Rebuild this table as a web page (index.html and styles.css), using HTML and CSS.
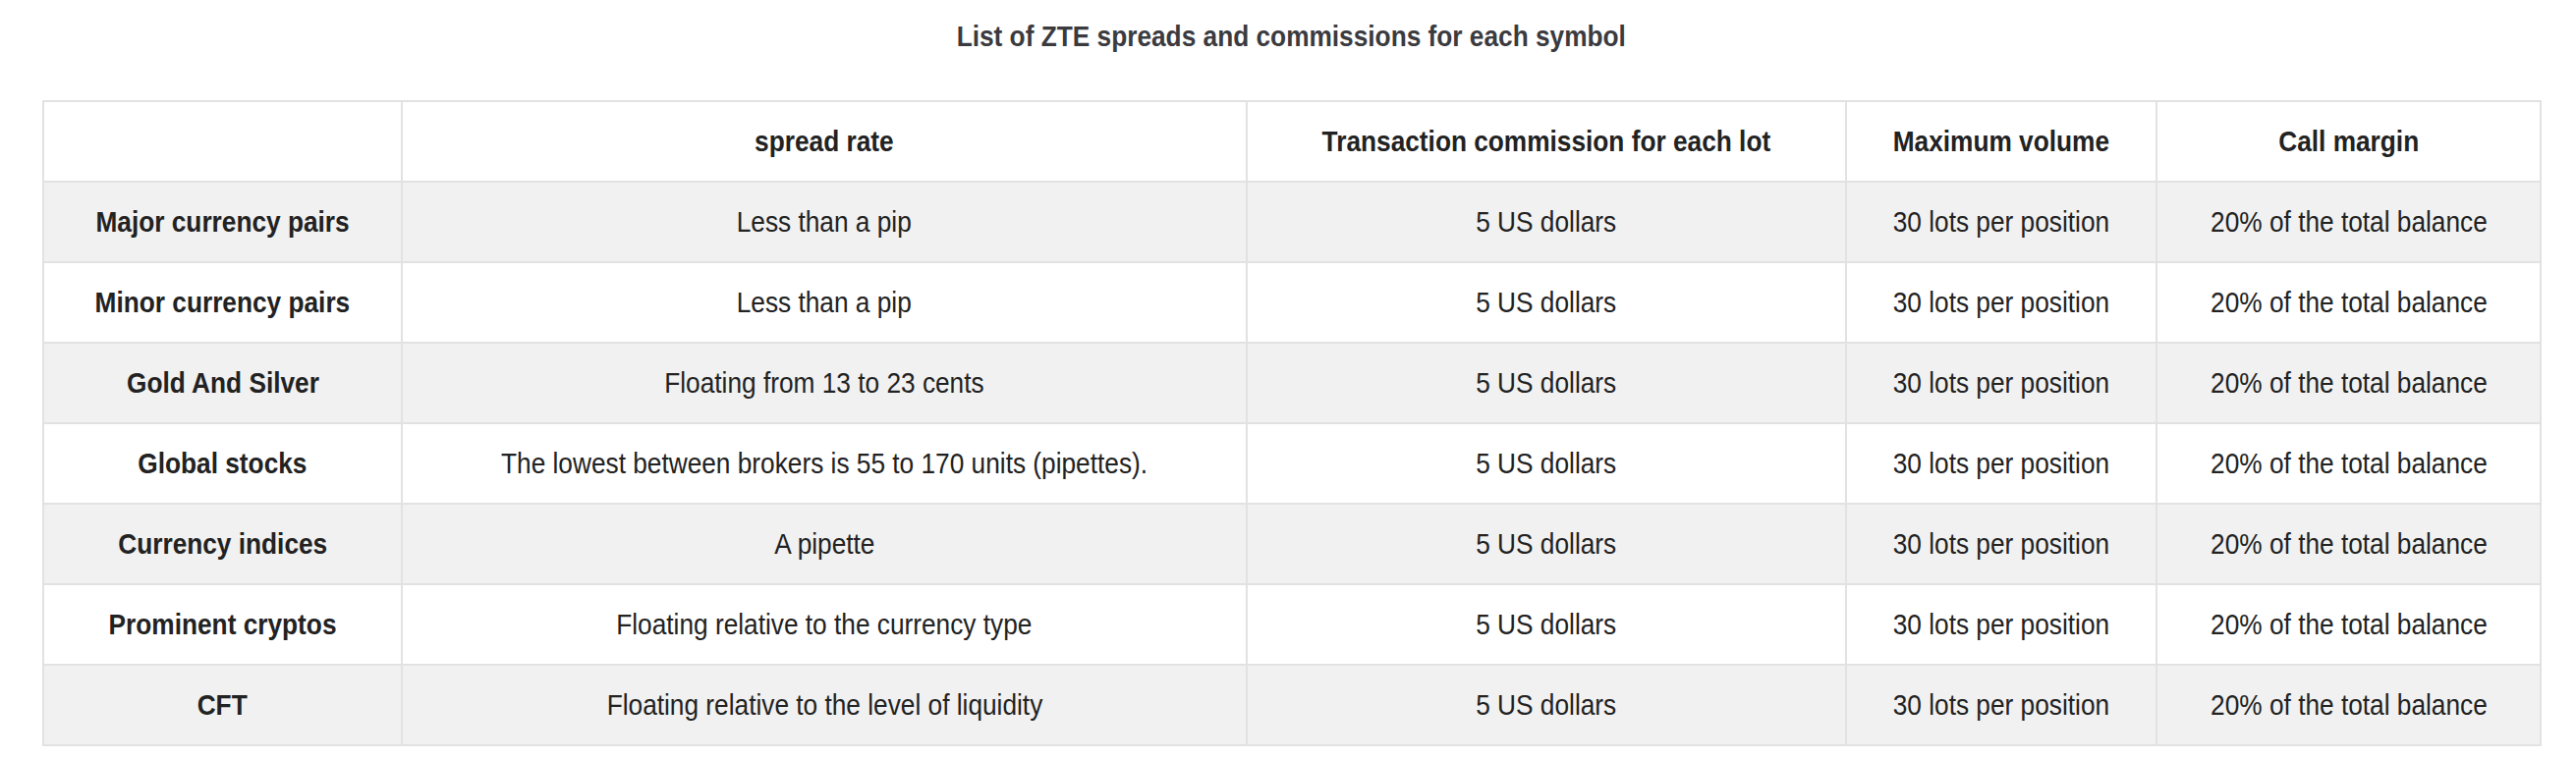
FILE: index.html
```html
<!DOCTYPE html>
<html lang="en">
<head>
<meta charset="utf-8">
<title>ZTE spreads and commissions</title>
<link rel="stylesheet" href="styles.css">
</head>
<body>
<main class="page">
  <h2 class="title"><span class="t">List of ZTE spreads and commissions for each symbol</span></h2>
  <table class="spreads">
    <colgroup>
      <col class="c1"><col class="c2"><col class="c3"><col class="c4"><col class="c5">
    </colgroup>
    <thead>
      <tr>
        <th></th>
        <th><span class="t">spread rate</span></th>
        <th><span class="t">Transaction commission for each lot</span></th>
        <th><span class="t">Maximum volume</span></th>
        <th><span class="t">Call margin</span></th>
      </tr>
    </thead>
    <tbody>
      <tr><th><span class="t">Major currency pairs</span></th><td><span class="t">Less than a pip</span></td><td><span class="t">5 US dollars</span></td><td><span class="t">30 lots per position</span></td><td><span class="t">20% of the total balance</span></td></tr>
      <tr><th><span class="t">Minor currency pairs</span></th><td><span class="t">Less than a pip</span></td><td><span class="t">5 US dollars</span></td><td><span class="t">30 lots per position</span></td><td><span class="t">20% of the total balance</span></td></tr>
      <tr><th><span class="t">Gold And Silver</span></th><td><span class="t">Floating from 13 to 23 cents</span></td><td><span class="t">5 US dollars</span></td><td><span class="t">30 lots per position</span></td><td><span class="t">20% of the total balance</span></td></tr>
      <tr><th><span class="t">Global stocks</span></th><td><span class="t">The lowest between brokers is 55 to 170 units (pipettes).</span></td><td><span class="t">5 US dollars</span></td><td><span class="t">30 lots per position</span></td><td><span class="t">20% of the total balance</span></td></tr>
      <tr><th><span class="t">Currency indices</span></th><td><span class="t">A pipette</span></td><td><span class="t">5 US dollars</span></td><td><span class="t">30 lots per position</span></td><td><span class="t">20% of the total balance</span></td></tr>
      <tr><th><span class="t">Prominent cryptos</span></th><td><span class="t">Floating relative to the currency type</span></td><td><span class="t">5 US dollars</span></td><td><span class="t">30 lots per position</span></td><td><span class="t">20% of the total balance</span></td></tr>
      <tr><th><span class="t">CFT</span></th><td><span class="t">Floating relative to the level of liquidity</span></td><td><span class="t">5 US dollars</span></td><td><span class="t">30 lots per position</span></td><td><span class="t">20% of the total balance</span></td></tr>
    </tbody>
  </table>
</main>
</body>
</html>
```
FILE: styles.css
```css
html, body {
  margin: 0;
  padding: 0;
  background: #ffffff;
}

.page {
  font-family: "Liberation Sans", Arial, sans-serif;
  color: #222222;
  padding: 19px 37px 0 43px;
}

.t {
  display: inline-block;
  white-space: nowrap;
  transform: scaleX(0.875);
  transform-origin: center center;
}

.title {
  margin: 0 0 47px 0;
  font-size: 30px;
  line-height: 36px;
  font-weight: 700;
  text-align: center;
  color: #3b3b3f;
}

.spreads {
  width: 2542px;
  table-layout: fixed;
  border-collapse: collapse;
  font-size: 30px;
}

.c1 { width: 365px; }
.c2 { width: 860px; }
.c3 { width: 610px; }
.c4 { width: 316px; }
.c5 { width: 391px; }

.spreads th,
.spreads td {
  height: 82px;
  padding: 0 10px;
  border: 2px solid #e2e2e2;
  text-align: center;
  vertical-align: middle;
  box-sizing: border-box;
  white-space: nowrap;
}

.spreads th {
  font-weight: 700;
}

.spreads td {
  font-weight: 400;
}

.spreads tbody tr:nth-child(odd) {
  background: #f1f1f1;
}
```
